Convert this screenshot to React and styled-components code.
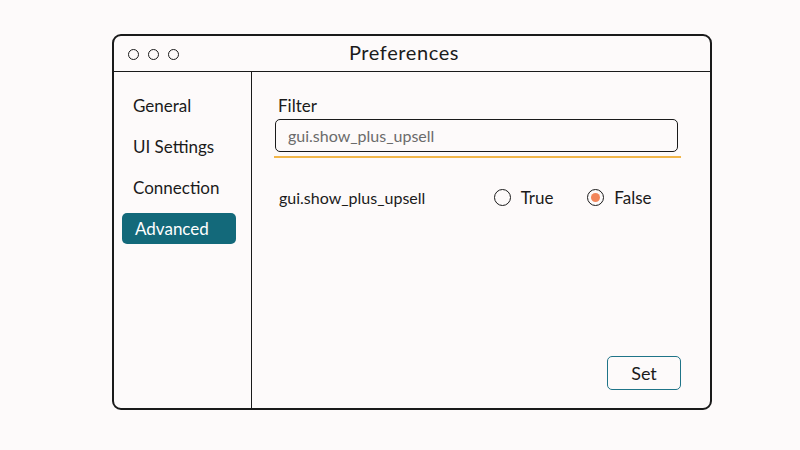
import React, { useState } from 'react';
import styled, { createGlobalStyle } from 'styled-components';

const NAV_ITEMS = ['General', 'UI Settings', 'Connection', 'Advanced'];

const GlobalStyle = createGlobalStyle`
  html, body {
    margin: 0;
    padding: 0;
    background: #fdfafa;
  }
  body {
    font-family: 'Lato', 'Noto Sans', sans-serif;
    color: #1b1b1b;
  }
`;

const App = () => {
  const [active] = useState('Advanced');
  const [value, setValue] = useState(false);

  return (
    <>
      <GlobalStyle />
      <Page>
        <Window>
          <TitleBar>
            <Dots>
              <Dot />
              <Dot />
              <Dot />
            </Dots>
            <Title>Preferences</Title>
          </TitleBar>
          <Body>
            <Sidebar>
              {NAV_ITEMS.map((item) => (
                <NavItem key={item} $active={item === active}>
                  {item}
                </NavItem>
              ))}
            </Sidebar>
            <Content>
              <Label>Filter</Label>
              <FilterInput>gui.show_plus_upsell</FilterInput>
              <Underline />
              <SettingRow>
                <SettingName>gui.show_plus_upsell</SettingName>
                <Option onClick={() => setValue(true)}>
                  <Radio $checked={value} />
                  True
                </Option>
                <Option onClick={() => setValue(false)}>
                  <Radio $checked={!value} />
                  False
                </Option>
              </SettingRow>
              <Footer>
                <SetButton>Set</SetButton>
              </Footer>
            </Content>
          </Body>
        </Window>
      </Page>
    </>
  );
};

const Page = styled.div`
  width: 800px;
  height: 450px;
  padding: 34px 0 0 112px;
  box-sizing: border-box;
`;

const Window = styled.div`
  width: 600px;
  height: 376px;
  box-sizing: border-box;
  border: 2px solid #1a1a1a;
  border-radius: 9px;
  display: flex;
  flex-direction: column;
  background: #fdfafa;
`;

const TitleBar = styled.div`
  height: 35px;
  border-bottom: 1.5px solid #1a1a1a;
  display: grid;
  grid-template-columns: 1fr auto 1fr;
  align-items: center;
  padding: 0 14px;
`;

const Dots = styled.div`
  display: flex;
  gap: 9px;
  padding-top: 2px;
`;

const Dot = styled.span`
  width: 9px;
  height: 9px;
  border: 1.5px solid #1a1a1a;
  border-radius: 50%;
`;

const Title = styled.div`
  font-size: 20px;
  letter-spacing: 0.6px;
  margin: 0 0 3px -16px;
`;

const Body = styled.div`
  flex: 1;
  display: flex;
`;

const Sidebar = styled.nav`
  width: 138px;
  flex-shrink: 0;
  border-right: 1.5px solid #1a1a1a;
  padding: 18px 0 0 8px;
  box-sizing: border-box;
  display: flex;
  flex-direction: column;
  gap: 10px;
`;

const NavItem = styled.div`
  width: 114px;
  height: 31px;
  box-sizing: border-box;
  display: flex;
  align-items: center;
  padding-left: ${(p) => (p.$active ? '13px' : '11px')};
  border-radius: 5px;
  font-size: 17px;
  background: ${(p) => (p.$active ? '#13697a' : 'transparent')};
  color: ${(p) => (p.$active ? '#ffffff' : '#1b1b1b')};
`;

const Content = styled.div`
  flex: 1;
  min-width: 0;
  display: flex;
  flex-direction: column;
  padding: 23px 29px 18px 23px;
`;

const Label = styled.div`
  font-size: 17px;
  padding-left: 3px;
  margin-bottom: 3px;
`;

const FilterInput = styled.div`
  height: 33px;
  box-sizing: border-box;
  border: 1.5px solid #1a1a1a;
  border-radius: 5px;
  display: flex;
  align-items: center;
  padding-left: 12px;
  margin-right: 3px;
  font-size: 16px;
  color: #6b6b6b;
`;

const Underline = styled.div`
  height: 2px;
  background: #f2b649;
  margin: 4px 0 0 -1px;
`;

const SettingRow = styled.div`
  display: flex;
  align-items: center;
  margin-top: 29px;
  padding-left: 4px;
  font-size: 16px;
`;

const SettingName = styled.div`
  width: 220px;
`;

const Option = styled.label`
  display: flex;
  align-items: center;
  gap: 10px;
  width: 96px;
  font-size: 17px;
  cursor: pointer;
`;

const Radio = styled.span`
  width: 17px;
  height: 17px;
  box-sizing: border-box;
  border: 1.5px solid #1a1a1a;
  border-radius: 50%;
  display: flex;
  align-items: center;
  justify-content: center;

  &::after {
    content: '';
    width: 9px;
    height: 9px;
    border-radius: 50%;
    background: ${(p) => (p.$checked ? '#f2855a' : 'transparent')};
  }
`;

const Footer = styled.div`
  margin-top: auto;
  display: flex;
  justify-content: flex-end;
`;

const SetButton = styled.button`
  width: 74px;
  height: 34px;
  border: 1.5px solid #1f7488;
  border-radius: 5px;
  background: transparent;
  font-family: inherit;
  font-size: 18px;
  color: #1b1b1b;
`;

export default App;
